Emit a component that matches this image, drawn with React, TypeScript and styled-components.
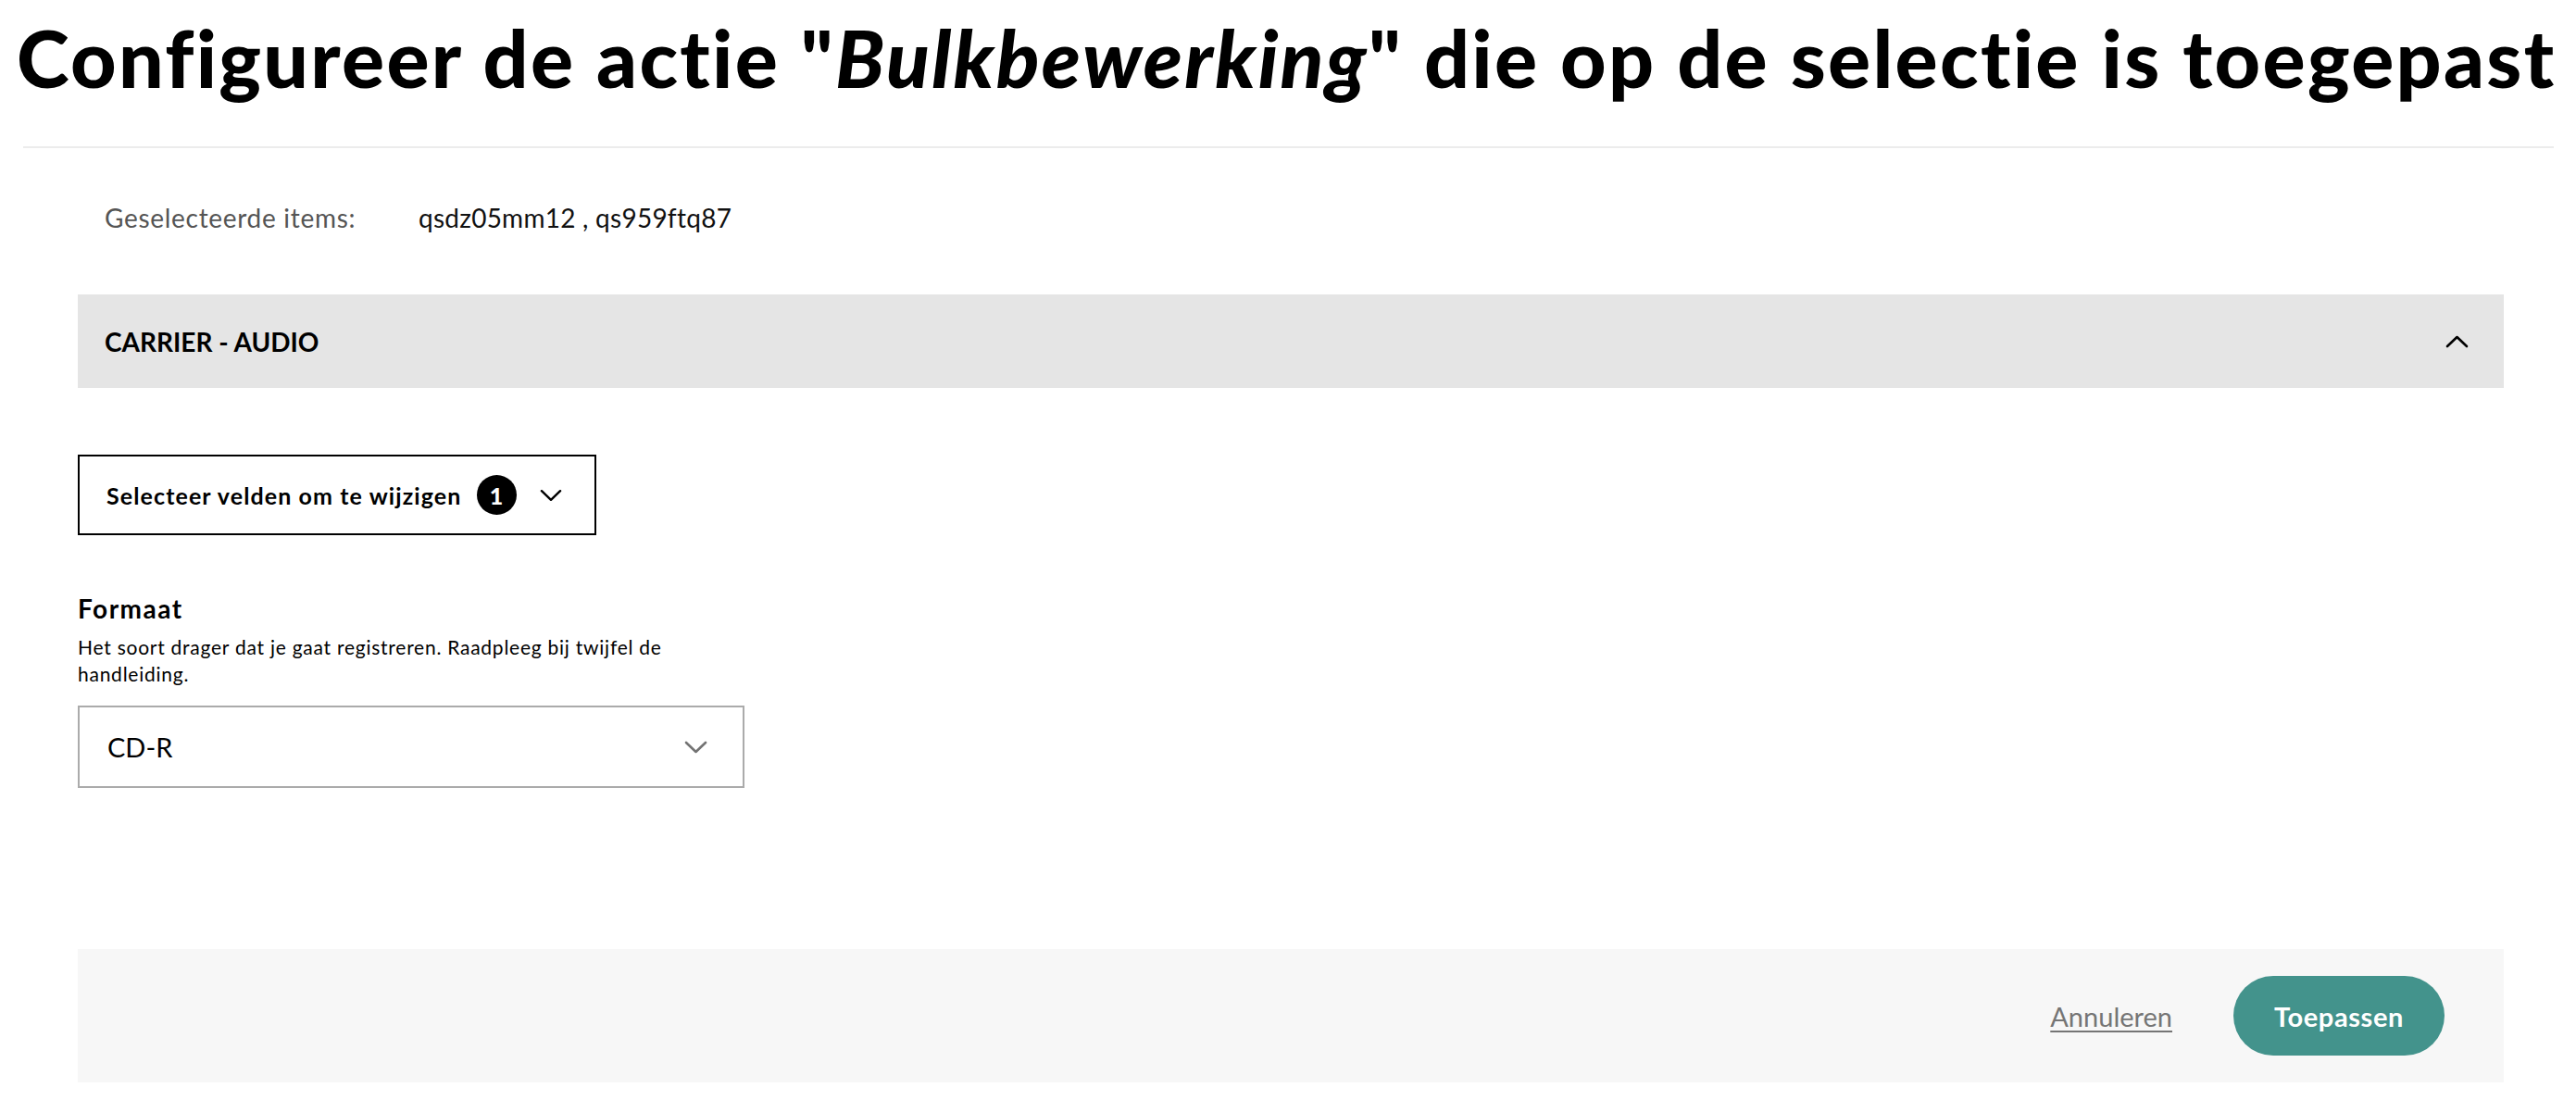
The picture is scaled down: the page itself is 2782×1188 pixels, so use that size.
import React from 'react'
import styled, { createGlobalStyle } from 'styled-components'

const GlobalStyle = createGlobalStyle`
  html, body {
    margin: 0;
    padding: 0;
    background: #fff;
  }
  body {
    font-family: Lato, 'Noto Sans', Arial, sans-serif;
    font-variant-ligatures: none;
    color: #000;
  }
  * {
    box-sizing: border-box;
  }
`

const Page = styled.div`
  display: flex;
  flex-direction: column;
  width: 2782px;
  height: 1188px;
  overflow: hidden;
`
const Title = styled.h1`
  margin: 0;
  height: 121px;
  padding-left: 18px;
  font-size: 86px;
  line-height: 124px;
  font-weight: 900;
  letter-spacing: 2.3px;
  white-space: nowrap;
  color: #000;

  em {
    font-style: italic;
  }
`
const Divider = styled.hr`
  margin: 37px 24px 0 25px;
  border: 0;
  height: 2px;
  background: #ececec;
`
const Content = styled.div`
  display: flex;
  flex-direction: column;
  margin: 0 78px 0 84px;
`
const SelectedRow = styled.div`
  display: flex;
  align-items: center;
  height: 40px;
  margin-top: 55px;
  padding-left: 29px;
  font-size: 28px;
  letter-spacing: 0.7px;
`
const SelectedLabel = styled.span`
  width: 339px;
  color: #555;
`
const SelectedValue = styled.span`
  color: #111;
  letter-spacing: 0.25px;
`
const AccordionHeader = styled.div`
  display: flex;
  align-items: center;
  justify-content: space-between;
  height: 101px;
  margin-top: 63px;
  padding: 0 38px 0 29px;
  background: #e5e5e5;
`
const AccordionTitle = styled.span`
  font-size: 28px;
  font-weight: 700;
  text-transform: uppercase;
`
const FieldsButton = styled.button`
  display: flex;
  align-items: center;
  width: 560px;
  height: 87px;
  margin-top: 72px;
  padding: 0 20px 0 29px;
  border: 2px solid #000;
  background: #fff;
  font-family: inherit;
  font-size: 25px;
  font-weight: 700;
  letter-spacing: 1.1px;
  white-space: nowrap;
  color: #000;
  cursor: pointer;
`
const Badge = styled.span`
  display: inline-flex;
  flex: none;
  align-items: center;
  justify-content: center;
  width: 43px;
  height: 43px;
  margin: 0 25px 0 16px;
  border-radius: 50%;
  background: #000;
  color: #fff;
  font-size: 25px;
  font-weight: 900;
  letter-spacing: 0;
`
const Field = styled.div`
  display: flex;
  flex-direction: column;
  margin-top: 59px;
  width: 720px;
`
const FieldLabel = styled.label`
  font-size: 28px;
  line-height: 40px;
  font-weight: 700;
  letter-spacing: 1.5px;
`
const FieldHelp = styled.p`
  margin: 7px 0 0;
  font-size: 21px;
  line-height: 29px;
  letter-spacing: 0.75px;
  white-space: nowrap;
  color: #000;
`
const SelectBox = styled.div`
  display: flex;
  align-items: center;
  justify-content: space-between;
  height: 89px;
  margin-top: 20px;
  padding: 0 38px 0 30px;
  border: 2px solid #ababab;
  font-size: 29px;
  color: #000;
`
const Footer = styled.div`
  display: flex;
  align-items: center;
  justify-content: flex-end;
  gap: 66px;
  height: 144px;
  margin-top: 174px;
  padding-right: 64px;
  background: #f7f7f7;
`
const CancelLink = styled.a`
  font-size: 29px;
  color: #757575;
  text-decoration: underline;
  text-underline-offset: 4px;
  text-decoration-thickness: 2px;
  cursor: pointer;
`
const ApplyButton = styled.button`
  width: 228px;
  height: 86px;
  border: 0;
  border-radius: 43px;
  background: #43938c;
  color: #fff;
  font-family: inherit;
  font-size: 29px;
  font-weight: 700;
  letter-spacing: 0.6px;
  cursor: pointer;
`

const Chevron = ({
  up,
  color = '#000',
  width = 25,
}: {
  up?: boolean
  color?: string
  width?: number
}) => (
  <svg width={width} height={14} viewBox="0 0 25 14" fill="none" style={{ flex: 'none' }}>
    <polyline
      points={up ? '2,12 12.5,2 23,12' : '2,2 12.5,12 23,2'}
      stroke={color}
      strokeWidth={2.6}
      strokeLinecap="round"
      strokeLinejoin="round"
    />
  </svg>
)

const App = () => {
  return (
    <>
      <GlobalStyle />
      <Page>
        <Title>
          Configureer de actie "<em>Bulkbewerking</em>" die op de selectie is toegepast
        </Title>
        <Divider />
        <Content>
          <SelectedRow>
            <SelectedLabel>Geselecteerde items:</SelectedLabel>
            <SelectedValue>qsdz05mm12 , qs959ftq87</SelectedValue>
          </SelectedRow>
          <AccordionHeader>
            <AccordionTitle>Carrier - Audio</AccordionTitle>
            <Chevron up />
          </AccordionHeader>
          <FieldsButton>
            <span>Selecteer velden om te wijzigen</span>
            <Badge>1</Badge>
            <Chevron width={24} />
          </FieldsButton>
          <Field>
            <FieldLabel>Formaat</FieldLabel>
            <FieldHelp>
              Het soort drager dat je gaat registreren. Raadpleeg bij twijfel de
              <br />
              handleiding.
            </FieldHelp>
            <SelectBox>
              <span>CD-R</span>
              <Chevron color="#737373" />
            </SelectBox>
          </Field>
          <Footer>
            <CancelLink>Annuleren</CancelLink>
            <ApplyButton>Toepassen</ApplyButton>
          </Footer>
        </Content>
      </Page>
    </>
  )
}

export default App
